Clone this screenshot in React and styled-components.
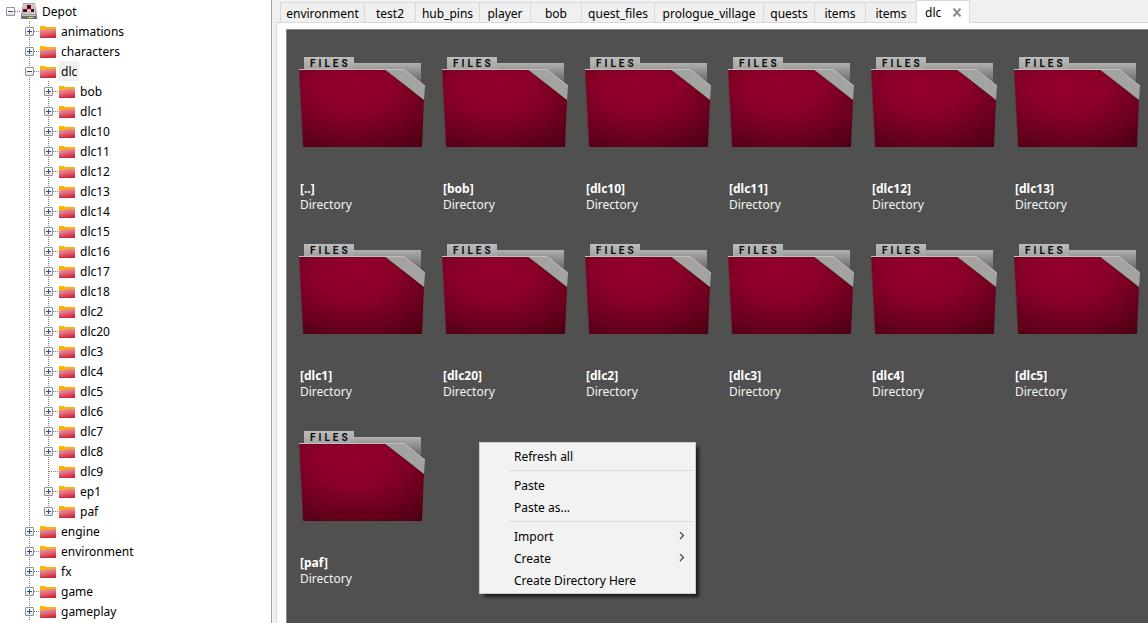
import React, { useId, useState } from "react";
import styled, { createGlobalStyle } from "styled-components";

const GlobalStyle = createGlobalStyle`
  * { box-sizing: border-box; }
  body {
    margin: 0;
    background: #f0f0f0;
    color: #000;
    font: 12px/16px "Noto Sans", "Open Sans", sans-serif;
  }
  button { font: inherit; color: inherit; }
  ul { list-style: none; margin: 0; padding: 0; }
`;

const Page = styled.div`
  display: flex;
  min-height: 100vh;
`;

/* ---------- depot tree ---------- */

const Sidebar = styled.nav`
  flex: 0 0 272px;
  padding: 1px 0 0 1px;
  background: #fff;
  border-right: 1px solid #a0a0a0;
`;

const TreeRow = styled.div`
  display: flex;
  align-items: center;
  height: 20px;
`;

const dots = (dir) =>
  `repeating-linear-gradient(${dir}, #808080 0 1px, transparent 1px 2px)`;

const Guide = styled.span`
  flex: 0 0 19px;
  height: 20px;
  background: ${dots("to bottom")} 9px 0 / 1px 100% no-repeat;
`;

const Branch = styled.span`
  display: flex;
  align-items: center;
  justify-content: center;
  flex: 0 0 19px;
  height: 20px;
  background:
    ${dots("to right")} 10px 10px / 9px 1px no-repeat,
    ${dots("to bottom")} 9px 0 / 1px ${(p) => (p.$root ? "0" : p.$last ? "10px" : "100%")} no-repeat;
`;

const Toggle = styled.button`
  display: flex;
  width: 9px;
  height: 9px;
  margin-top: 1px;
  padding: 0;
  border: 1px solid #919191;
  border-radius: 1px;
  background: linear-gradient(#fff, #e4e4e4);
`;

const TreeIcon = styled.svg`
  flex: none;
  width: 16px;
  height: 16px;
  margin: 0 3px 0 1px;
`;

const TreeLabel = styled.span`
  padding: 2px 2px 0;
  line-height: 18px;
  background: ${(p) => (p.$selected ? "#f0f0f0" : "transparent")};
`;

const Children = styled.ul`
  && { padding-left: ${(p) => (p.$indent ? "19px" : "0")}; }
`;

function Expander({ name, open, onToggle }) {
  return (
    <Toggle aria-label={`Toggle ${name}`} aria-expanded={open} onClick={onToggle}>
      <svg width="7" height="7" viewBox="0 0 7 7" aria-hidden="true">
        <path d={open ? "M1 3.5h5" : "M1 3.5h5M3.5 1v5"} stroke="#2b4f94" />
      </svg>
    </Toggle>
  );
}

function FolderIcon() {
  const id = useId();
  return (
    <TreeIcon viewBox="0 0 16 16" aria-hidden="true">
      <defs>
        <linearGradient id={id} x1="0" y1="0" x2="0.3" y2="1">
          <stop offset="0" stopColor="#eb9aa2" />
          <stop offset="0.5" stopColor="#e0707c" />
          <stop offset="1" stopColor="#d2293f" />
        </linearGradient>
      </defs>
      <path d="M0 3h5l1 1h10v5H0z" fill="#fdb404" />
      <path d="M0 7h5l1-1h10v9H0z" fill={`url(#${id})`} />
      <path d="M0 14.5h16" stroke="#d02a3e" />
    </TreeIcon>
  );
}

function DepotIcon() {
  return (
    <TreeIcon viewBox="0 0 16 16" aria-hidden="true">
      <path d="M2 0h12l2 12v4H0v-4z" fill="#a3a3a3" />
      <path d="M0 12h16v4H0z" fill="#707070" />
      <path d="M1 12.5h14" stroke="#c4c4c4" />
      <path d="M2 1h12v10H2z" fill="#cdc6c7" />
      <path d="M6 2h4v4h3v3H10V6H6v3H2V6h4z" fill="#7d0820" />
      <path d="M6 2h3v3H6zM3 6h3v3H3zM10 6h3v3h-3z" fill="#56000f" />
      <path d="M7 14.5h5" stroke="#e6e23a" />
    </TreeIcon>
  );
}

function TreeNode({ node, guides = [], last, root }) {
  const [open, setOpen] = useState(Boolean(node.children));
  return (
    <li>
      <TreeRow>
        {guides.map((g) => <Guide key={g} />)}
        <Branch $root={root} $last={last}>
          {!node.leaf && (
            <Expander name={node.name} open={open} onToggle={() => setOpen(!open)} />
          )}
        </Branch>
        {root ? <DepotIcon /> : <FolderIcon />}
        <TreeLabel $selected={node.selected}>{node.name}</TreeLabel>
      </TreeRow>
      {open && node.children && (
        <Children $indent={root}>
          {node.children.map((child, i) => (
            <TreeNode
              key={child.name}
              node={child}
              guides={root ? [] : [...guides, node.name]}
              last={!root && i === node.children.length - 1}
            />
          ))}
        </Children>
      )}
    </li>
  );
}

const dlcFolders = [
  "bob", "dlc1", "dlc10", "dlc11", "dlc12", "dlc13", "dlc14", "dlc15",
  "dlc16", "dlc17", "dlc18", "dlc2", "dlc20", "dlc3", "dlc4", "dlc5",
  "dlc6", "dlc7", "dlc8", "dlc9", "ep1", "paf",
].map((name) => ({ name, leaf: name === "dlc9" }));

const depot = {
  name: "Depot",
  children: [
    { name: "animations" },
    { name: "characters" },
    { name: "dlc", selected: true, children: dlcFolders },
    { name: "engine" },
    { name: "environment" },
    { name: "fx" },
    { name: "game" },
    { name: "gameplay" },
  ],
};

/* ---------- tabs ---------- */

const Main = styled.main`
  flex: 1;
  min-width: 0;
  display: flex;
  flex-direction: column;
  padding-left: 4px;
`;

const TabBar = styled.div`
  display: flex;
  align-items: flex-end;
  height: 23px;
  padding-left: 4px;
  box-shadow: inset 0 -1px #d9d9d9;
`;

const Tab = styled.button`
  display: flex;
  align-items: center;
  justify-content: center;
  flex: none;
  min-width: ${(p) => p.$width || 51}px;
  height: ${(p) => (p.$active ? "23px" : "21px")};
  padding: ${(p) => (p.$active ? "1px 7px 0 8px" : "2px 5px 0 5px")};
  gap: 11px;
  white-space: nowrap;
  border: solid #d9d9d9;
  border-width: ${(p) => (p.$active ? "1px 1px 0 1px" : "1px 0 1px 1px")};
  background: ${(p) => (p.$active ? "#fff" : "#f0f0f0")};
`;

const TabPanel = styled.section`
  flex: 1;
  display: flex;
  flex-direction: column;
  padding: 6px 0 0 9px;
  background: #fff;
  border-left: 1px solid #d9d9d9;
`;

const tabs = [
  { name: "environment", width: 84 },
  { name: "test2" },
  { name: "hub_pins", width: 64 },
  { name: "player" },
  { name: "bob" },
  { name: "quest_files", width: 73 },
  { name: "prologue_village", width: 109 },
  { name: "quests" },
  { name: "items" },
  { name: "items" },
];

/* ---------- file browser ---------- */

const Browser = styled.div`
  position: relative;
  flex: 1;
  padding: 26px 0 32px 12px;
  background: #505050;
  border: solid #828790;
  border-width: 1px 0 0 1px;
`;

const FileGrid = styled.ul`
  display: grid;
  grid-template-columns: repeat(auto-fill, 126px);
  gap: 30px 17px;
`;

const Tile = styled.li`
  display: flex;
  flex-direction: column;
  gap: 33px;
  color: #f4f4f4;
`;

const Caption = styled.div`
  display: flex;
  flex-direction: column;
  padding-left: 1px;
`;

const FileName = styled.strong`
  font-weight: 700;
  color: #fff;
`;

function FolderThumb() {
  const id = useId();
  return (
    <svg width="126" height="92" viewBox="0 0 126 92" aria-hidden="true">
      <defs>
        <radialGradient id={`${id}r`} gradientUnits="userSpaceOnUse" cx="0" cy="0" r="1"
          gradientTransform="translate(54 30) scale(116 78)">
          <stop offset="0" stopColor="#93002b" />
          <stop offset="0.35" stopColor="#8a0028" />
          <stop offset="0.7" stopColor="#68001d" />
          <stop offset="1" stopColor="#470013" />
        </radialGradient>
        <linearGradient id={`${id}t`} x1="0" y1="0" x2="0" y2="1">
          <stop offset="0" stopColor="#bcbcbc" />
          <stop offset="1" stopColor="#a2a2a2" />
        </linearGradient>
        <linearGradient id={`${id}b`} x1="0" y1="0" x2="0" y2="1">
          <stop offset="0" stopColor="#b0b0b0" />
          <stop offset="1" stopColor="#606060" />
        </linearGradient>
      </defs>
      <path d="M54 7h68v21H54z" fill={`url(#${id}b)`} />
      <path d="M5 1h50v13H5z" fill={`url(#${id}t)`} />
      <text x="11" y="11" fontFamily="Roboto, sans-serif" fontSize="10" fontWeight="700" letterSpacing="3" fill="#0c0c0c">FILES</text>
      <path d="M0 14h86l39 30-2 47H4z" fill={`url(#${id}r)`} />
      <path d="M0 14h86l39 31" fill="none" stroke="#3c0d18" strokeOpacity="0.6" />
      <path d="M87 14h18l21 16-1 14z" fill="#a3a3a1" />
      <path d="M105 13.5l21 16.5" fill="none" stroke="#d3bac2" />
      <path d="M0 13.5h105" stroke="#c6bec0" />
      <path d="M0 14l4 77" stroke="#5f3540" strokeOpacity="0.7" />
    </svg>
  );
}

const entries = [
  "..", "bob", "dlc10", "dlc11", "dlc12", "dlc13",
  "dlc1", "dlc20", "dlc2", "dlc3", "dlc4", "dlc5", "paf",
];

/* ---------- context menu ---------- */

const Menu = styled.div`
  position: absolute;
  top: 412px;
  left: 192px;
  width: 217px;
  padding: 2px;
  background: #f2f2f2;
  border: 1px solid #ccc;
  box-shadow: 4px 4px 3px -1px rgba(0, 0, 0, 0.6);
`;

const MenuItem = styled.button`
  display: flex;
  align-items: center;
  justify-content: space-between;
  width: 100%;
  height: 22px;
  padding: 2px 7px 0 32px;
  border: 0;
  background: transparent;
  text-align: left;
`;

const Separator = styled.hr`
  height: 1px;
  margin: 3px 0 3px 28px;
  border: 0;
  background: #d7d7d7;
`;

const menuGroups = [
  [{ label: "Refresh all" }],
  [{ label: "Paste" }, { label: "Paste as..." }],
  [{ label: "Import", sub: true }, { label: "Create", sub: true }, { label: "Create Directory Here" }],
];

function ContextMenu() {
  return (
    <Menu role="menu">
      {menuGroups.map((group, i) => (
        <React.Fragment key={group[0].label}>
          {i > 0 && <Separator />}
          {group.map((item) => (
            <MenuItem key={item.label} role="menuitem" aria-haspopup={item.sub ? "menu" : undefined}>
              {item.label}
              {item.sub && (
                <svg width="8" height="10" viewBox="0 0 8 10" aria-hidden="true">
                  <path d="M2 0l3.5 3.5L2 7" fill="none" stroke="#404040" strokeWidth="1.2" />
                </svg>
              )}
            </MenuItem>
          ))}
        </React.Fragment>
      ))}
    </Menu>
  );
}

export default function App() {
  return (
    <Page>
      <GlobalStyle />
      <Sidebar aria-label="Depot">
        <ul>
          <TreeNode node={depot} root />
        </ul>
      </Sidebar>
      <Main>
        <TabBar role="tablist">
          {tabs.map((tab, i) => (
            <Tab key={i} role="tab" aria-selected="false" $width={tab.width}>{tab.name}</Tab>
          ))}
          <Tab role="tab" aria-selected="true" $active>
            dlc
            <svg width="10" height="9" viewBox="0 0 10 9" aria-hidden="true">
              <path d="M1.5 0.5l7 8M8.5 0.5l-7 8" stroke="#8c8c8c" strokeWidth="2" />
            </svg>
          </Tab>
        </TabBar>
        <TabPanel role="tabpanel">
          <Browser>
            <FileGrid>
              {entries.map((name) => (
                <Tile key={name}>
                  <FolderThumb />
                  <Caption>
                    <FileName>[{name}]</FileName>
                    <span>Directory</span>
                  </Caption>
                </Tile>
              ))}
            </FileGrid>
            <ContextMenu />
          </Browser>
        </TabPanel>
      </Main>
    </Page>
  );
}
